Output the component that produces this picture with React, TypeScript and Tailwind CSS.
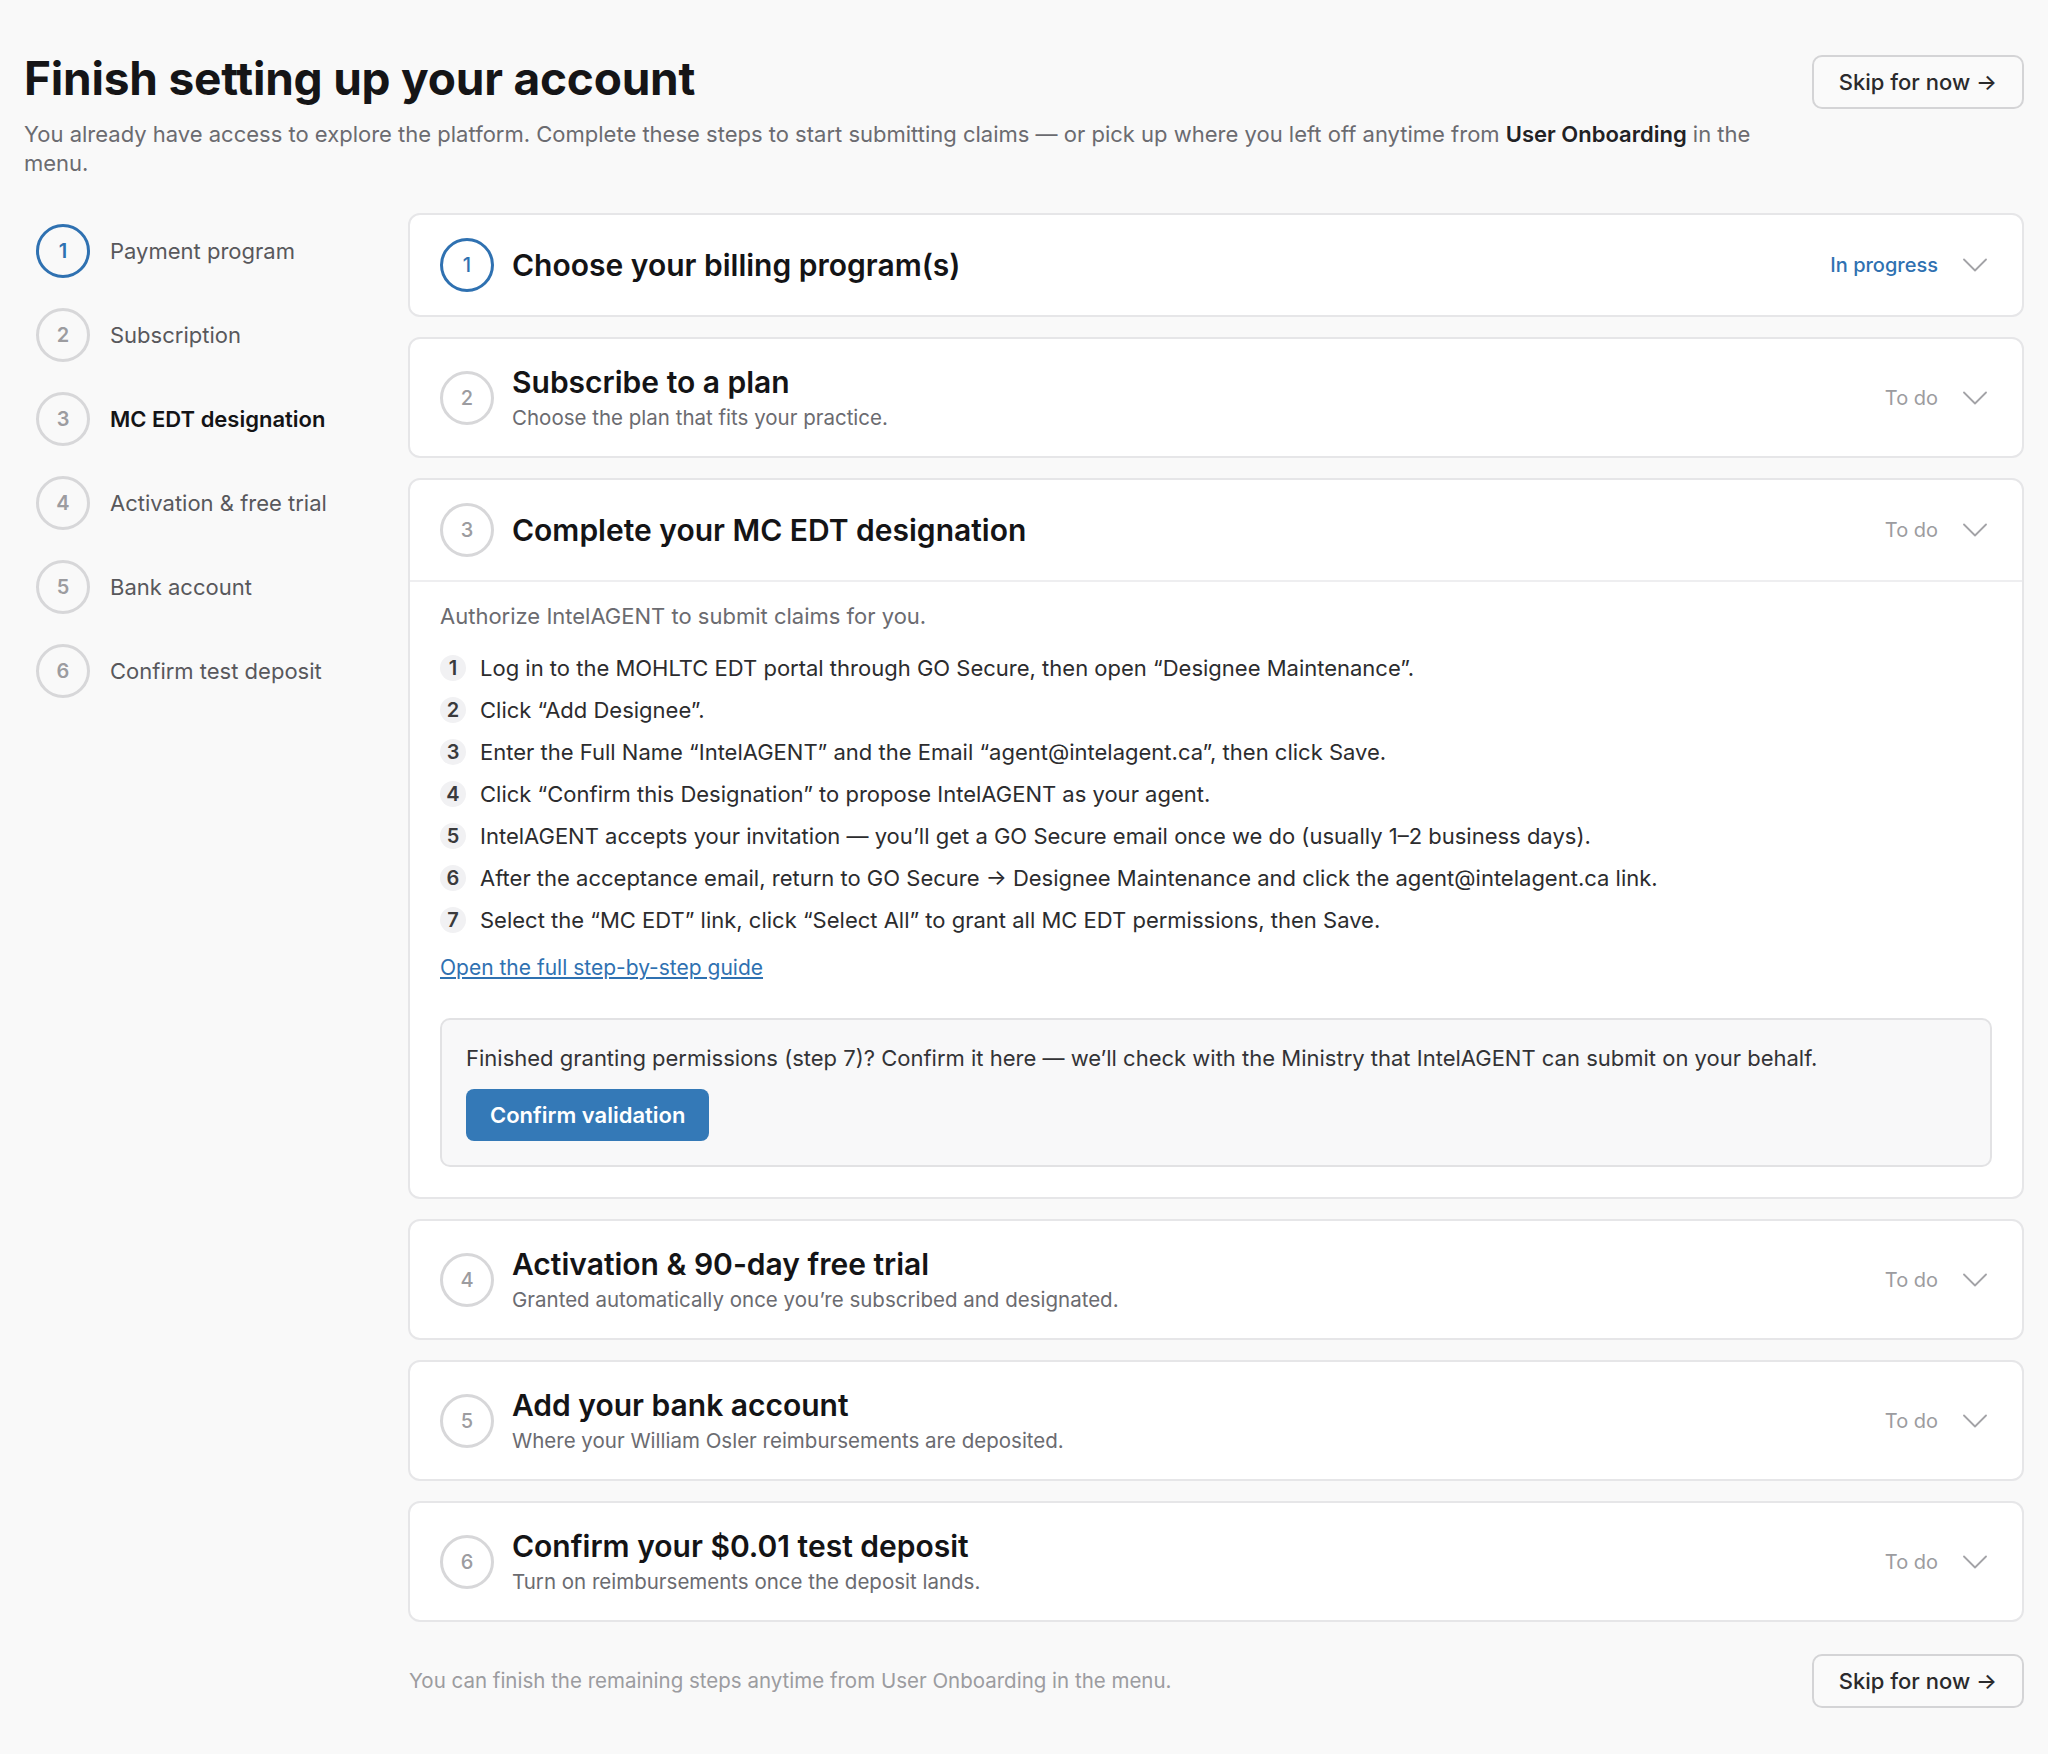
import { ReactNode } from "react";

const BLUE = "text-[#2f71b1]";

const sideSteps = [
  "Payment program",
  "Subscription",
  "MC EDT designation",
  "Activation & free trial",
  "Bank account",
  "Confirm test deposit",
];

const guideSteps = [
  "Log in to the MOHLTC EDT portal through GO Secure, then open “Designee Maintenance”.",
  "Click “Add Designee”.",
  "Enter the Full Name “IntelAGENT” and the Email “agent@intelagent.ca”, then click Save.",
  "Click “Confirm this Designation” to propose IntelAGENT as your agent.",
  "IntelAGENT accepts your invitation — you’ll get a GO Secure email once we do (usually 1–2 business days).",
  "After the acceptance email, return to GO Secure → Designee Maintenance and click the agent@intelagent.ca link.",
  "Select the “MC EDT” link, click “Select All” to grant all MC EDT permissions, then Save.",
];

const StepCircle = ({ n, active, bold }: { n: number; active?: boolean; bold?: boolean }) => (
  <span
    className={
      (active
        ? "border-[#2f71b1] text-[#2f71b1] "
        : "border-[#d7d7d9] text-[#9c9ca0] ") +
      (bold ? "font-semibold " : "font-medium ") +
      "flex h-[54px] w-[54px] shrink-0 items-center justify-center rounded-full border-[3px] text-[20px]"
    }
  >
    {n}
  </span>
);

const Chevron = () => (
  <svg width="24" height="14" viewBox="0 0 24 14" fill="none" className="ml-[25px] shrink-0">
    <polyline points="1,1.5 12,12.5 23,1.5" stroke="#a3a3a7" strokeWidth="1.8" strokeLinecap="round" strokeLinejoin="round" />
  </svg>
);

const SkipButton = ({ className = "" }: { className?: string }) => (
  <button
    className={`h-[54px] shrink-0 rounded-[10px] border-2 border-[#d4d4d6] bg-[#fafafa] px-[25px] text-[22px] font-medium text-[#2a2a2c] ${className}`}
  >
    Skip for now →
  </button>
);

interface StepCardProps {
  n: number;
  title: string;
  sub?: string;
  active?: boolean;
  children?: ReactNode;
}

const StepCard = ({ n, title, sub, active, children }: StepCardProps) => (
  <div className="rounded-xl border-2 border-[#e6e6e8] bg-white">
    <div className="flex items-center py-[23px] pl-[30px] pr-[35px]">
      <StepCircle n={n} active={active} />
      <div className="ml-[18px] min-w-0 flex-1">
        <h2 className="text-[30px] font-semibold leading-[41px] text-[#141416]">{title}</h2>
        {sub && <p className="text-[20.5px] leading-[30px] text-[#6b6b70]">{sub}</p>}
      </div>
      {active ? (
        <span className={`text-[20px] font-medium ${BLUE}`}>In progress</span>
      ) : (
        <span className="text-[20px] text-[#9c9ca0]">To do</span>
      )}
      <Chevron />
    </div>
    {children}
  </div>
);

export default function App() {
  return (
    <div className="min-h-screen bg-[#f9f9f9] px-6 pb-[49px] pt-[50px] font-[family-name:Inter,sans-serif] text-[#141416]">
      <header className="flex items-start justify-between gap-8">
        <div className="min-w-0 flex-1">
          <h1 className="text-[46px] font-bold leading-[56px] tracking-[-0.2px] text-[#151517]">
            Finish setting up your account
          </h1>
          <p className="mt-[14px] text-[22px] leading-[29px] text-[#6b6b70]">
            You already have access to explore the platform. Complete these steps to start submitting claims — or pick
            up where you left off anytime from <span className="font-semibold text-[#222224]">User Onboarding</span> in
            the
            <br />
            menu.
          </p>
        </div>
        <SkipButton className="mt-[5px]" />
      </header>

      <div className="mt-[35px] flex gap-6">
        {/* left step list */}
        <nav className="w-[360px] shrink-0 pl-3 pt-[11px]">
          <ul className="flex flex-col gap-[30px]">
            {sideSteps.map((label, i) => (
              <li key={label} className="flex items-center gap-5">
                <StepCircle n={i + 1} active={i === 0} bold />
                <span
                  className={
                    i === 2
                      ? "text-[22px] font-semibold text-[#141416]"
                      : "text-[22px] text-[#58585c]"
                  }
                >
                  {label}
                </span>
              </li>
            ))}
          </ul>
        </nav>

        <div className="min-w-0 flex-1">
          <div className="flex flex-col gap-5">
            <StepCard n={1} title="Choose your billing program(s)" active />
            <StepCard n={2} title="Subscribe to a plan" sub="Choose the plan that fits your practice." />
            <StepCard n={3} title="Complete your MC EDT designation">
              <div className="border-t-2 border-[#eeeef0] px-[30px] pb-[30px] pt-[20px]">
                <p className="text-[22px] leading-[29px] text-[#6b6b70]">Authorize IntelAGENT to submit claims for you.</p>
                <ol className="mt-[21px] flex flex-col gap-[10px]">
                  {guideSteps.map((s, i) => (
                    <li key={i} className="flex items-center text-[22px] leading-[32px] text-[#2c2c2e]">
                      <span className="mr-[14px] flex h-[26px] w-[26px] shrink-0 items-center justify-center rounded-full bg-[#f1f1f3] text-[20px] font-semibold text-[#3a3a3c]">
                        {i + 1}
                      </span>
                      {s}
                    </li>
                  ))}
                </ol>
                <div className="mt-[18px]">
                  <a href="#" className={`text-[21px] leading-[28px] underline underline-offset-2 ${BLUE}`}>
                    Open the full step-by-step guide
                  </a>
                </div>
                <div className="mt-9 rounded-[10px] border-2 border-[#e2e2e4] bg-[#f8f8f9] px-6 pb-6 pt-[24px]">
                  <p className="text-[22px] leading-[29px] text-[#333336]">
                    Finished granting permissions (step 7)? Confirm it here — we’ll check with the Ministry that IntelAGENT
                    can submit on your behalf.
                  </p>
                  <button className="mt-4 h-[52px] rounded-lg bg-[#3479b7] px-[24px] text-[22px] font-semibold text-white">
                    Confirm validation
                  </button>
                </div>
              </div>
            </StepCard>
            <StepCard
              n={4}
              title="Activation & 90-day free trial"
              sub="Granted automatically once you’re subscribed and designated."
            />
            <StepCard n={5} title="Add your bank account" sub="Where your William Osler reimbursements are deposited." />
            <StepCard n={6} title="Confirm your $0.01 test deposit" sub="Turn on reimbursements once the deposit lands." />
          </div>

          <div className="mt-8 flex items-center justify-between">
            <p className="pl-px text-[20.5px] text-[#9c9ca0]">
              You can finish the remaining steps anytime from User Onboarding in the menu.
            </p>
            <SkipButton />
          </div>
        </div>
      </div>
    </div>
  );
}
